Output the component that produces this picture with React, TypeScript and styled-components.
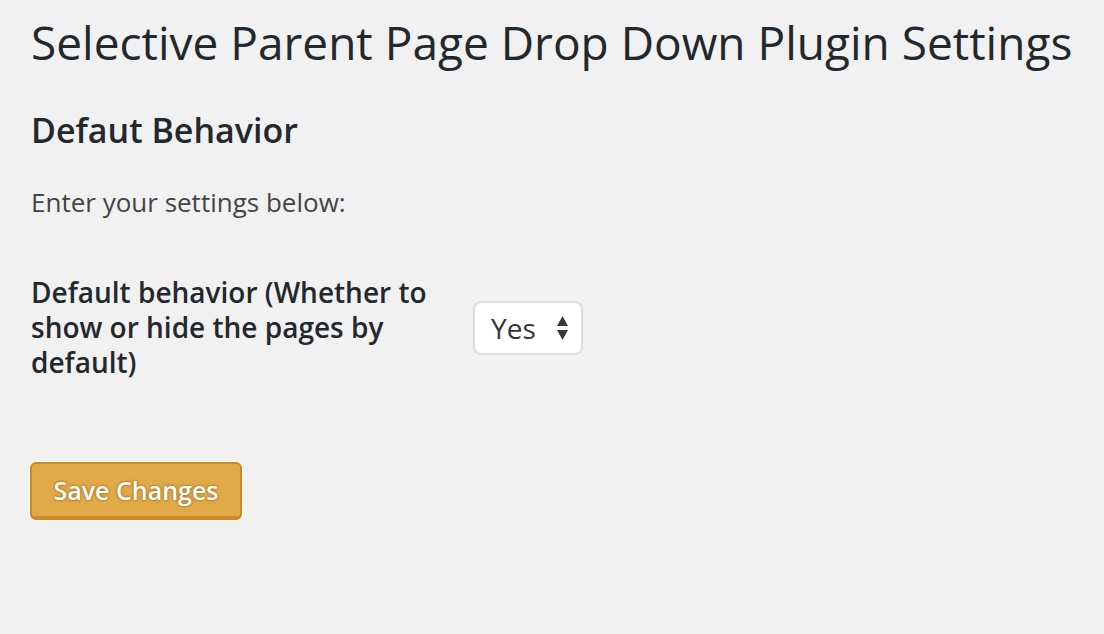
import React from "react";
import styled, { createGlobalStyle } from "styled-components";

const Global = createGlobalStyle`
  html, body { margin: 0; padding: 0; background: #f1f1f1; }
  body { font-family: "Open Sans", sans-serif; color: #23282d; }
`;

const Wrap = styled.div`
  padding: 10px 30px 40px 31px;
  display: flex;
  flex-direction: column;
  align-items: flex-start;
`;

const Title = styled.h1`
  margin: 0;
  font-size: 46px;
  font-weight: 400;
  line-height: 64px;
  color: #23282d;
`;

const SectionTitle = styled.h2`
  margin: 36px 0 0;
  font-size: 34px;
  font-weight: 600;
  line-height: 40px;
  color: #23282d;
`;

const Intro = styled.p`
  margin: 32px 0 0;
  font-size: 26px;
  line-height: 40px;
  color: #444;
`;

const FormRow = styled.div`
  display: grid;
  grid-template-columns: 442px auto;
  align-items: start;
  margin-top: 53px;
`;

const Label = styled.label`
  font-size: 28px;
  font-weight: 600;
  line-height: 35px;
  color: #23282d;
  padding-right: 20px;
`;

const Select = styled.div`
  display: inline-flex;
  align-items: center;
  justify-content: space-between;
  width: 110px;
  height: 54px;
  box-sizing: border-box;
  margin-top: 26px;
  padding: 0 12px 0 16px;
  background: #fff;
  border: 2px solid #dddddd;
  border-radius: 8px;
  font-size: 28px;
  color: #32373c;
`;

const Submit = styled.div`
  margin-top: 82px;
  margin-left: -1px;
`;

const Button = styled.button`
  width: 212px;
  height: 58px;
  box-sizing: border-box;
  background: #e1a948;
  border: 2px solid #c88c25;
  border-bottom-width: 4px;
  border-radius: 6px;
  color: #fff;
  font-family: "Open Sans", sans-serif;
  font-size: 25px;
  font-weight: 600;
  text-shadow: 0 0 3px #a5701b, 0 0 2px #a5701b;
  padding: 0;
  cursor: pointer;
`;

function Arrows() {
  return (
    <svg width="13" height="26" viewBox="0 0 13 26">
      <path d="M6.5 1 L12 11 L1 11 Z" fill="#32373c" />
      <path d="M1 15 L12 15 L6.5 25 Z" fill="#32373c" />
    </svg>
  );
}

export default function App() {
  return (
    <>
      <Global />
      <Wrap>
        <Title>Selective Parent Page Drop Down Plugin Settings</Title>
        <SectionTitle>Defaut Behavior</SectionTitle>
        <Intro>Enter your settings below:</Intro>
        <FormRow>
          <Label>Default behavior (Whether to show or hide the pages by default)</Label>
          <div>
            <Select>
              <span>Yes</span>
              <Arrows />
            </Select>
          </div>
        </FormRow>
        <Submit>
          <Button>Save Changes</Button>
        </Submit>
      </Wrap>
    </>
  );
}
